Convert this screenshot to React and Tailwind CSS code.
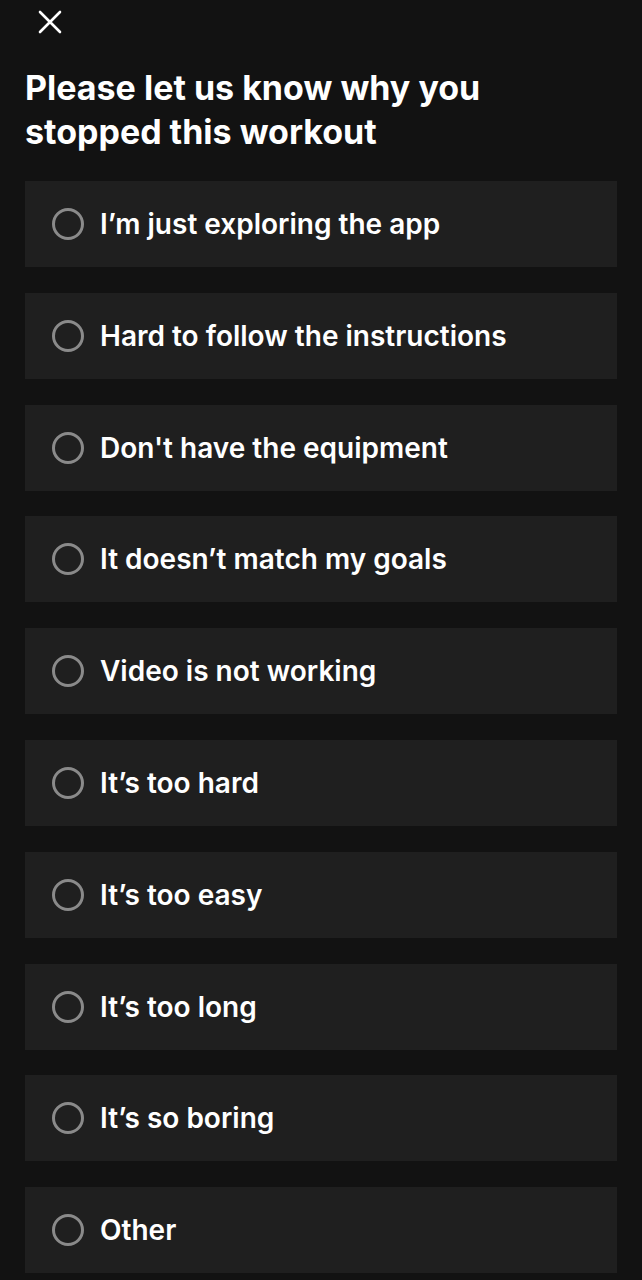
const reasons = [
  "I’m just exploring the app",
  "Hard to follow the instructions",
  "Don't have the equipment",
  "It doesn’t match my goals",
  "Video is not working",
  "It’s too hard",
  "It’s too easy",
  "It’s too long",
  "It’s so boring",
  "Other",
];

export default function App() {
  return (
    <div
      className="min-h-[1280px] w-full bg-[#121212] text-white px-[25px]"
      style={{ fontFamily: "Inter, sans-serif" }}
    >
      <div className="h-[44px] flex items-center pl-[13px]">
        <svg width="24" height="24" viewBox="0 0 24 24" fill="none" stroke="white" strokeWidth="2.6" strokeLinecap="round">
          <path d="M2 2 L22 22 M22 2 L2 22" />
        </svg>
      </div>
      <h1 className="mt-[22px] text-[34px] leading-[44px] font-bold">
        Please let us know why you stopped this workout
      </h1>
      <div className="mt-[27px] flex flex-col gap-[25.8px]">
        {reasons.map((r) => (
          <button
            key={r}
            type="button"
            className="h-[86px] w-full bg-[#1f1f1f] flex items-center gap-[16px] pl-[27px] text-left"
          >
            <span className="w-[32px] h-[32px] rounded-full border-[3px] border-[#8a8a8a] shrink-0" />
            <span className="text-[28px] font-semibold">{r}</span>
          </button>
        ))}
      </div>
    </div>
  );
}
